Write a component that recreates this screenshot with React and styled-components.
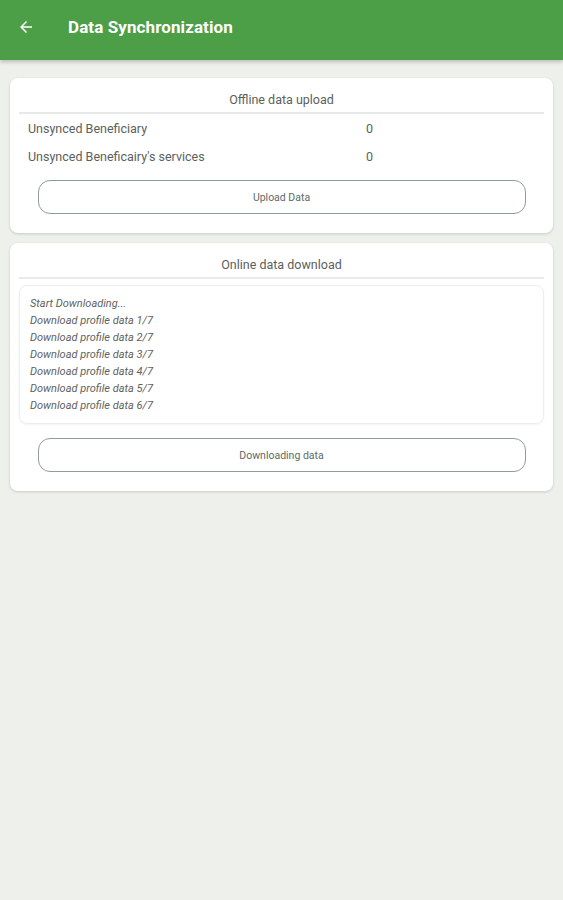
import styled, { createGlobalStyle } from 'styled-components'

const GlobalStyle = createGlobalStyle`
  body {
    margin: 0;
    background-color: #eef0ec;
    font-family: Roboto, "Noto Sans", sans-serif;
  }
`

const Page = styled.div`
  min-height: 900px;
  background-color: #eef0ec;
`

const Header = styled.header`
  height: 60px;
  box-sizing: border-box;
  padding: 0 0 6px 17px;
  background-color: #4c9e47;
  display: flex;
  align-items: center;
  box-shadow: 0 2px 4px rgba(0, 0, 0, 0.22);
`

const BackButton = styled.div`
  width: 18px;
  height: 18px;
  display: flex;
  align-items: center;
  justify-content: center;
  margin-right: 33px;
`

const Title = styled.h1`
  margin: 0;
  color: #ffffff;
  font-size: 17px;
  font-weight: 700;
  letter-spacing: 0.1px;
`

const Content = styled.main`
  padding: 18px 10px;
  display: flex;
  flex-direction: column;
  gap: 10px;
`

const Card = styled.section`
  background-color: #ffffff;
  border-radius: 8px;
  box-shadow: 0 1px 3px rgba(0, 0, 0, 0.16);
  padding: 8px 9px 19px;
`

const CardTitle = styled.div`
  text-align: center;
  font-size: 12.5px;
  color: #5a5f5d;
  padding: 6px 0 5px;
  border-bottom: 2px solid #e7eae8;
`

const InfoRow = styled.div`
  display: flex;
  font-size: 12.5px;
  color: #5a5f5d;
  height: 28px;
  align-items: center;
  padding-left: 9px;
`

const InfoLabel = styled.span`
  width: 338px;
`

const OutlineButton = styled.button`
  display: block;
  width: 488px;
  height: 34px;
  margin: ${(props) => props.$top || 10}px auto 0;
  background: #ffffff;
  border: 1px solid #8f9c98;
  border-radius: 12px;
  font-family: Roboto, "Noto Sans", sans-serif;
  font-size: 10.5px;
  color: #5b6b69;
`

const LogBox = styled.div`
  margin-top: 6px;
  border: 1px solid #eceeed;
  border-radius: 8px;
  padding: 9px 10px 9px;
  box-shadow: 0 1px 2px rgba(0, 0, 0, 0.05);
`

const LogLine = styled.div`
  font-style: italic;
  font-size: 11px;
  line-height: 17px;
  color: #5e6260;
`

const logs = [
  'Start Downloading...',
  'Download profile data 1/7',
  'Download profile data 2/7',
  'Download profile data 3/7',
  'Download profile data 4/7',
  'Download profile data 5/7',
  'Download profile data 6/7',
]

export default function App() {
  return (
    <Page>
      <GlobalStyle />
      <Header>
        <BackButton>
          <svg width="18" height="18" viewBox="0 0 24 24" fill="#ffffff">
            <path d="M20 11H7.83l5.59-5.59L12 4l-8 8 8 8 1.41-1.41L7.83 13H20v-2z" />
          </svg>
        </BackButton>
        <Title>Data Synchronization</Title>
      </Header>
      <Content>
        <Card>
          <CardTitle>Offline data upload</CardTitle>
          <InfoRow>
            <InfoLabel>Unsynced Beneficiary</InfoLabel>
            <span>0</span>
          </InfoRow>
          <InfoRow>
            <InfoLabel>Unsynced Beneficairy's services</InfoLabel>
            <span>0</span>
          </InfoRow>
          <OutlineButton $top={10}>Upload Data</OutlineButton>
        </Card>
        <Card>
          <CardTitle>Online data download</CardTitle>
          <LogBox>
            {logs.map((line) => (
              <LogLine key={line}>{line}</LogLine>
            ))}
          </LogBox>
          <OutlineButton $top={14}>Downloading data</OutlineButton>
        </Card>
      </Content>
    </Page>
  )
}
